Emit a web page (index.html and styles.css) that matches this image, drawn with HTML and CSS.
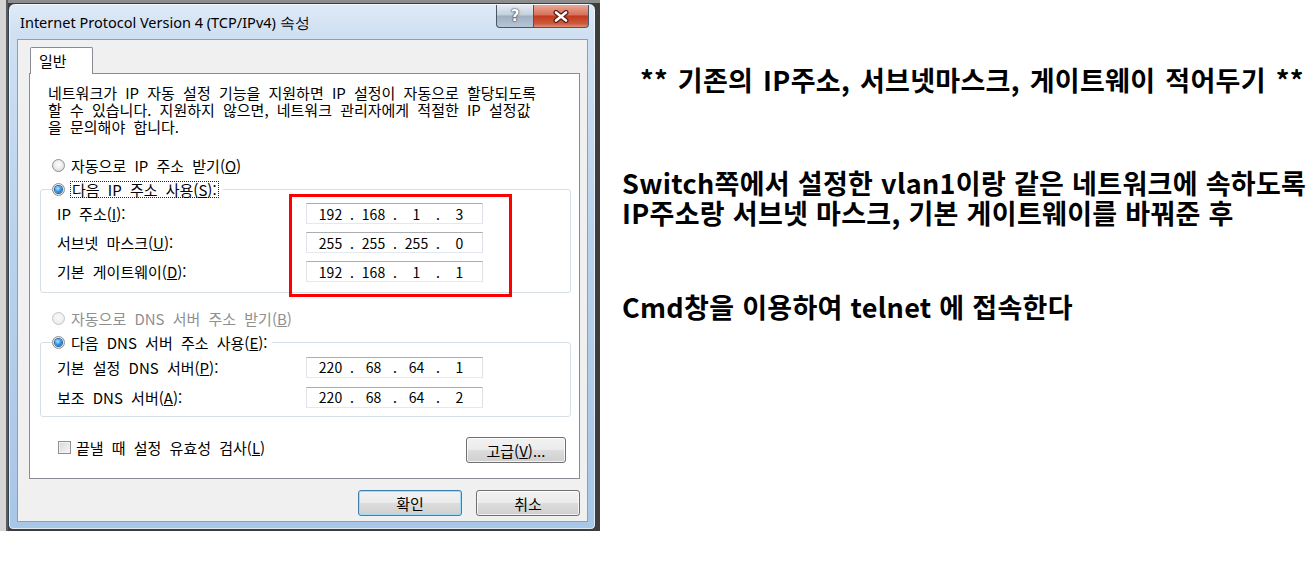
FILE: index.html
```html
<!DOCTYPE html>
<html lang="ko">
<head>
    <meta charset="UTF-8">
    <meta name="viewport" content="width=device-width, initial-scale=1.0">
    <title>TCP/IPv4 속성</title>
    <link rel="stylesheet" href="styles.css">
</head>
<body>
<div class="page">
    <div class="desk">
        <div class="window">
            <div class="titlebar">
                <span class="title">Internet Protocol Version 4 (TCP/IPv4) 속성</span>
                <div class="caption">
                    <span class="cap-btn help">?</span>
                    <span class="cap-btn close">
                        <svg width="18" height="13" viewBox="0 0 18 13">
                            <path d="M4 2.5 L14 10.5 M14 2.5 L4 10.5" stroke="#5a1b10" stroke-width="5" stroke-linecap="round"/>
                            <path d="M4 2.5 L14 10.5 M14 2.5 L4 10.5" stroke="#fff" stroke-width="2.6" stroke-linecap="round"/>
                        </svg>
                    </span>
                </div>
            </div>
            <div class="client">
                <div class="tabs"><span class="tab">일반</span></div>
                <div class="panel">
                    <p class="desc">네트워크가 IP 자동 설정 기능을 지원하면 IP 설정이 자동으로 할당되도록<br>할 수 있습니다. 지원하지 않으면, 네트워크 관리자에게 적절한 IP 설정값<br>을 문의해야 합니다.</p>

                    <div class="radio-row"><span class="radio"></span>자동으로 IP 주소 받기(<u>O</u>)</div>
                    <fieldset class="group">
                        <legend><span class="radio on"></span><span class="focus">다음 IP 주소 사용(<u>S</u>):</span></legend>
                        <div class="field-row">
                            <span class="label">IP 주소(<u>I</u>):</span>
                            <div class="ip"><span>192</span><i>.</i><span>168</span><i>.</i><span>1</span><i>.</i><span>3</span></div>
                        </div>
                        <div class="field-row">
                            <span class="label">서브넷 마스크(<u>U</u>):</span>
                            <div class="ip"><span>255</span><i>.</i><span>255</span><i>.</i><span>255</span><i>.</i><span>0</span></div>
                        </div>
                        <div class="field-row">
                            <span class="label">기본 게이트웨이(<u>D</u>):</span>
                            <div class="ip"><span>192</span><i>.</i><span>168</span><i>.</i><span>1</span><i>.</i><span>1</span></div>
                        </div>
                    </fieldset>

                    <div class="radio-row disabled"><span class="radio"></span>자동으로 DNS 서버 주소 받기(<u>B</u>)</div>
                    <fieldset class="group dns">
                        <legend><span class="radio on"></span>다음 DNS 서버 주소 사용(<u>E</u>):</legend>
                        <div class="field-row">
                            <span class="label">기본 설정 DNS 서버(<u>P</u>):</span>
                            <div class="ip"><span>220</span><i>.</i><span>68</span><i>.</i><span>64</span><i>.</i><span>1</span></div>
                        </div>
                        <div class="field-row">
                            <span class="label">보조 DNS 서버(<u>A</u>):</span>
                            <div class="ip"><span>220</span><i>.</i><span>68</span><i>.</i><span>64</span><i>.</i><span>2</span></div>
                        </div>
                    </fieldset>

                    <div class="check-row">
                        <span class="check-label"><span class="check"></span>끝낼 때 설정 유효성 검사(<u>L</u>)</span>
                        <button class="btn advanced">고급(<u>V</u>)...</button>
                    </div>

                    <!-- highlight drawn over the IP fields -->
                    <div class="mark"></div>
                </div>
                <div class="footer">
                    <button class="btn default">확인</button>
                    <button class="btn">취소</button>
                </div>
            </div>
        </div>
    </div>

    <div class="notes">
        <p class="lead">** 기존의 IP주소, 서브넷마스크, 게이트웨이 적어두기 **</p>
        <p>Switch쪽에서 설정한 vlan1이랑 같은 네트워크에 속하도록<br>IP주소랑 서브넷 마스크, 기본 게이트웨이를 바꿔준 후</p>
        <p class="last">Cmd창을 이용하여 telnet 에 접속한다</p>
    </div>
</div>
</body>
</html>
```

FILE: styles.css
```css
* {
    box-sizing: border-box;
}
html, body {
    margin: 0;
    padding: 0;
}
body {
    width: 1316px;
    height: 567px;
    overflow: hidden;
    background: #fff;
    font-family: "Noto Sans CJK KR", sans-serif;
    color: #000;
}
.page {
    display: flex;
    align-items: flex-start;
}

/* screenshot area with the desktop behind the dialog */
.desk {
    width: 600px;
    height: 531px;
    padding: 3px 4px 0 8px;
    background:
        linear-gradient(90deg, #d6d6d6 0, #d6d6d6 6px, #5b5b5b 6px, #5b5b5b 8px, transparent 8px),
        linear-gradient(180deg, #8d8d8d 0, #8d8d8d 3px, #3d3d3d 3px);
}
.window {
    width: 588px;
    height: 527px;
    border: 1px solid #33404e;
    border-radius: 7px 7px 5px 5px;
    background: linear-gradient(180deg, #dfeaf6 0, #cfe0f2 30px, #b9d2ec 45%, #a8c6e7 100%);
    box-shadow: inset 0 0 0 1px rgba(255, 255, 255, 0.65);
    display: flex;
    flex-direction: column;
}
.titlebar {
    height: 35px;
    display: flex;
    padding-left: 11px;
}
.title {
    font-family: "Noto Sans", sans-serif;
    font-size: 14.5px;
    align-self: center;
    margin-top: 1px;
}
.caption {
    margin-left: auto;
    margin-right: 6px;
    margin-top: 1px;
    display: flex;
    height: 23px;
}
.cap-btn {
    display: flex;
    align-items: center;
    justify-content: center;
    height: 23px;
    border: 1px solid #4a5666;
    border-top: none;
}
.help {
    width: 37px;
    border-right: none;
    border-radius: 0 0 0 4px;
    background: linear-gradient(180deg, #e4ebf3 0, #c4d0de 45%, #9eafc3 50%, #b7c6d6 100%);
    color: #fff;
    font: 700 15px "DejaVu Sans", sans-serif;
    text-shadow: 0 0 2px #1f2a36, 0 0 1px #1f2a36;
}
.close {
    width: 56px;
    border-radius: 0 0 4px 0;
    background: linear-gradient(180deg, #e9a895 0, #d8705a 45%, #c2391d 50%, #cc5a3e 85%, #df8e74 100%);
}

.client {
    flex: 1;
    margin: 0 7px 7px 8px;
    background: #f0f0f0;
    border: 1px solid #8a9fb8;
    padding: 7px 7px 5px 11px;
    display: flex;
    flex-direction: column;
    font-size: 15px;
    word-spacing: 4px;
}
.tabs {
    display: flex;
    position: relative;
    z-index: 1;
    margin-bottom: -1px;
}
.tab {
    width: 63px;
    height: 27px;
    margin-left: 1px;
    padding-left: 8px;
    line-height: 26px;
    background: #fff;
    border: 1px solid #898c95;
    border-bottom: none;
    border-radius: 2px 2px 0 0;
}
.panel {
    position: relative;
    background: #fff;
    border: 1px solid #898c95;
    padding: 10px 8px 15px 18px;
}
.desc {
    margin: 0;
    line-height: 17px;
}
.radio-row {
    display: flex;
    align-items: center;
    height: 20px;
    margin: 20px 0 0 4px;
}
.radio-row.disabled {
    margin-top: 15px;
    color: #8f8f8f;
}
.radio {
    flex: none;
    position: relative;
    display: inline-block;
    width: 13px;
    height: 13px;
    margin-right: 6px;
    border: 1px solid #8d8f91;
    border-radius: 50%;
    background: radial-gradient(circle at 50% 40%, #ffffff 0, #e9e9e9 55%, #cfcfcf 100%);
}
.disabled .radio {
    border-color: #c4c4c4;
    background: radial-gradient(circle at 50% 40%, #fafafa 0, #efefef 60%, #e2e2e2 100%);
}
.radio.on::after {
    content: "";
    position: absolute;
    left: 2px;
    top: 2px;
    width: 7px;
    height: 7px;
    border-radius: 50%;
    background: radial-gradient(circle at 40% 35%, #b8e6ff 0, #2f95e8 50%, #0c4a97 100%);
    box-shadow: 0 0 0 1px #255f9f;
}
.group {
    margin: 4px 0 0 -8px;
    padding: 0 0 6px 11px;
    border: 1px solid #d5dfe5;
    border-radius: 3px;
    min-width: 0;
}
.group.dns {
    padding-bottom: 4px;
}
.group legend {
    display: flex;
    align-items: center;
    height: 20px;
    padding: 0 4px 0 0;
}
.focus {
    border: 1px dotted #222;
    line-height: 15px;
    padding: 0 1px;
    margin-left: -1px;
}
.field-row {
    display: grid;
    grid-template-columns: 254px 177px;
    align-items: center;
    height: 29px;
}
.dns .field-row {
    height: 30px;
}
.label {
    padding-left: 5px;
}
.ip {
    display: flex;
    align-items: center;
    width: 177px;
    height: 21px;
    padding: 0 5px 0 6px;
    background: #fff;
    border: 1px solid;
    border-color: #abadb3 #dbdfe6 #e3e9ef #e2e3ea;
    word-spacing: 0;
    font-size: 14px;
}
.ip span {
    width: 35px;
    text-align: center;
}
.ip i {
    width: 8px;
    font-style: normal;
    text-align: center;
}
.check-row {
    display: flex;
    justify-content: space-between;
    align-items: flex-start;
    margin-top: 20px;
}
.check-label {
    display: flex;
    align-items: center;
    height: 20px;
    margin-left: 10px;
}
.check {
    width: 13px;
    height: 13px;
    margin-right: 5px;
    border: 1px solid #8f8f8f;
    background: linear-gradient(135deg, #d8d8d8 0, #f7f7f7 100%);
    box-shadow: inset 0 0 0 1px #f2f2f2;
}
.btn {
    height: 26px;
    width: 104px;
    padding: 0;
    border: 1px solid #707070;
    border-radius: 3px;
    background: linear-gradient(180deg, #f2f2f2 0, #ebebeb 50%, #dddddd 50%, #cfcfcf 100%);
    box-shadow: inset 0 0 0 1px rgba(255, 255, 255, 0.75);
    font: 15px "Noto Sans CJK KR", sans-serif;
    word-spacing: 0;
    color: #000;
}
.btn.advanced {
    width: 100px;
    margin-right: 5px;
}
.btn.default {
    border-color: #3c7fb1;
    box-shadow: inset 0 0 0 1px #9fdcf8;
}
.footer {
    display: flex;
    justify-content: flex-end;
    gap: 14px;
    margin-top: 11px;
}
.mark {
    position: absolute;
    left: 259px;
    top: 120px;
    width: 223px;
    height: 103px;
    border: 3px solid #ff0000;
}

/* explanation text on the right */
.notes {
    padding: 65px 0 0 22px;
    font: 700 27px/30px "Noto Sans CJK KR", sans-serif;
    letter-spacing: 0.3px;
    white-space: nowrap;
}
.notes p {
    margin: 0;
}
.notes .lead {
    margin: 0 0 73px 18px;
    word-spacing: 2px;
}
.notes .last {
    margin-top: 64px;
}
```
